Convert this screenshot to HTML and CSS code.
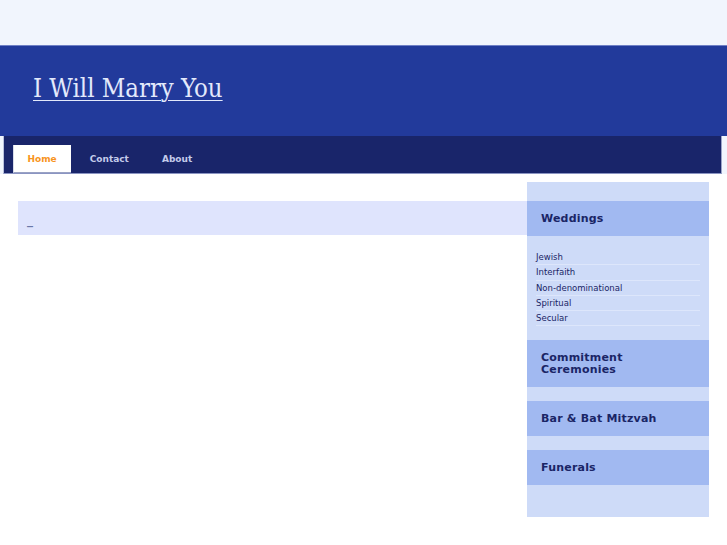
FILE: index.html
```html
<!DOCTYPE html>
<html>
<head>
<meta charset="utf-8">
<title>I Will Marry You</title>
<link rel="stylesheet" href="styles.css">
</head>
<body>
<div class="topband"></div>
<header class="masthead">
  <a class="site-title" href="#">I Will Marry You</a>
</header>
<div class="navwrap">
  <nav class="nav">
    <a class="tab active" href="#">Home</a>
    <a class="tab" href="#">Contact</a>
    <a class="tab" href="#">About</a>
  </nav>
</div>
<div class="page">
  <main class="main">
    <div class="band">_</div>
  </main>
  <aside class="sidebar">
    <div class="section">
      <h2 class="shead">Weddings</h2>
      <ul class="links">
        <li>Jewish</li>
        <li>Interfaith</li>
        <li>Non-denominational</li>
        <li>Spiritual</li>
        <li>Secular</li>
      </ul>
    </div>
    <h2 class="shead">Commitment<br>Ceremonies</h2>
    <h2 class="shead">Bar &amp; Bat Mitzvah</h2>
    <h2 class="shead">Funerals</h2>
  </aside>
</div>
</body>
</html>
```

FILE: styles.css
```css
html, body {
  margin: 0;
  padding: 0;
  background: #ffffff;
  font-family: "DejaVu Sans", Verdana, sans-serif;
}
.topband {
  height: 45px;
  background: #f1f5fd;
}
.masthead {
  box-sizing: border-box;
  height: 91px;
  background: #223a9b;
  border-top: 1px solid #6f80c5;
  padding: 28px 0 0 33px;
}
.site-title {
  font-family: "DejaVu Serif", Georgia, serif;
  font-stretch: condensed;
  font-size: 25.5px;
  line-height: 29px;
  color: #e3e9fb;
  text-decoration: underline;
  text-decoration-thickness: 1px;
  text-underline-offset: 3px;
}
.navwrap {
  background: #f1f5fd;
  padding: 0 5px 0 3px;
}
.nav {
  display: flex;
  gap: 4px;
  background: #19256a;
  border-left: 1px solid #b9c1dd;
  border-right: 1px solid #9aa3c8;
  border-bottom: 1px solid #8a94c2;
  padding: 9px 0 0 9px;
  height: 28px;
}
.tab {
  display: flex;
  align-items: center;
  padding: 0 14.5px;
  height: 27px;
  font-size: 9px;
  font-weight: bold;
  color: #c3cbea;
  text-decoration: none;
}
.tab.active {
  background: #ffffff;
  color: #f8941d;
  border-left: 1px solid #d8dcea;
  border-bottom: 1px solid #9aa2c4;
  padding-left: 13.5px;
}
.page {
  display: flex;
  align-items: flex-start;
  padding: 8px 18px 0 18px;
}
.main {
  flex: 1;
  padding-top: 19px;
}
.band {
  height: 34px;
  background: #dfe4fd;
  color: #6a78a8;
  font-size: 12px;
  font-weight: bold;
  line-height: 14px;
  padding: 12px 0 0 9px;
  box-sizing: border-box;
}
.sidebar {
  width: 182px;
  background: #cedbf8;
  padding: 19px 0 32px;
  display: flex;
  flex-direction: column;
  gap: 14px;
}
.section {
  display: flex;
  flex-direction: column;
  gap: 14px;
}
.shead {
  margin: 0;
  background: #a1b9f1;
  color: #1a2566;
  font-size: 11px;
  font-weight: bold;
  letter-spacing: 0.2px;
  line-height: 11.5px;
  padding: 11.75px 14px;
}
.links {
  list-style: none;
  margin: 0 9px;
  padding: 0;
}
.links li {
  font-size: 8.5px;
  line-height: 14.3px;
  color: #1a2566;
  border-bottom: 1px solid #dde6fb;
}
```
